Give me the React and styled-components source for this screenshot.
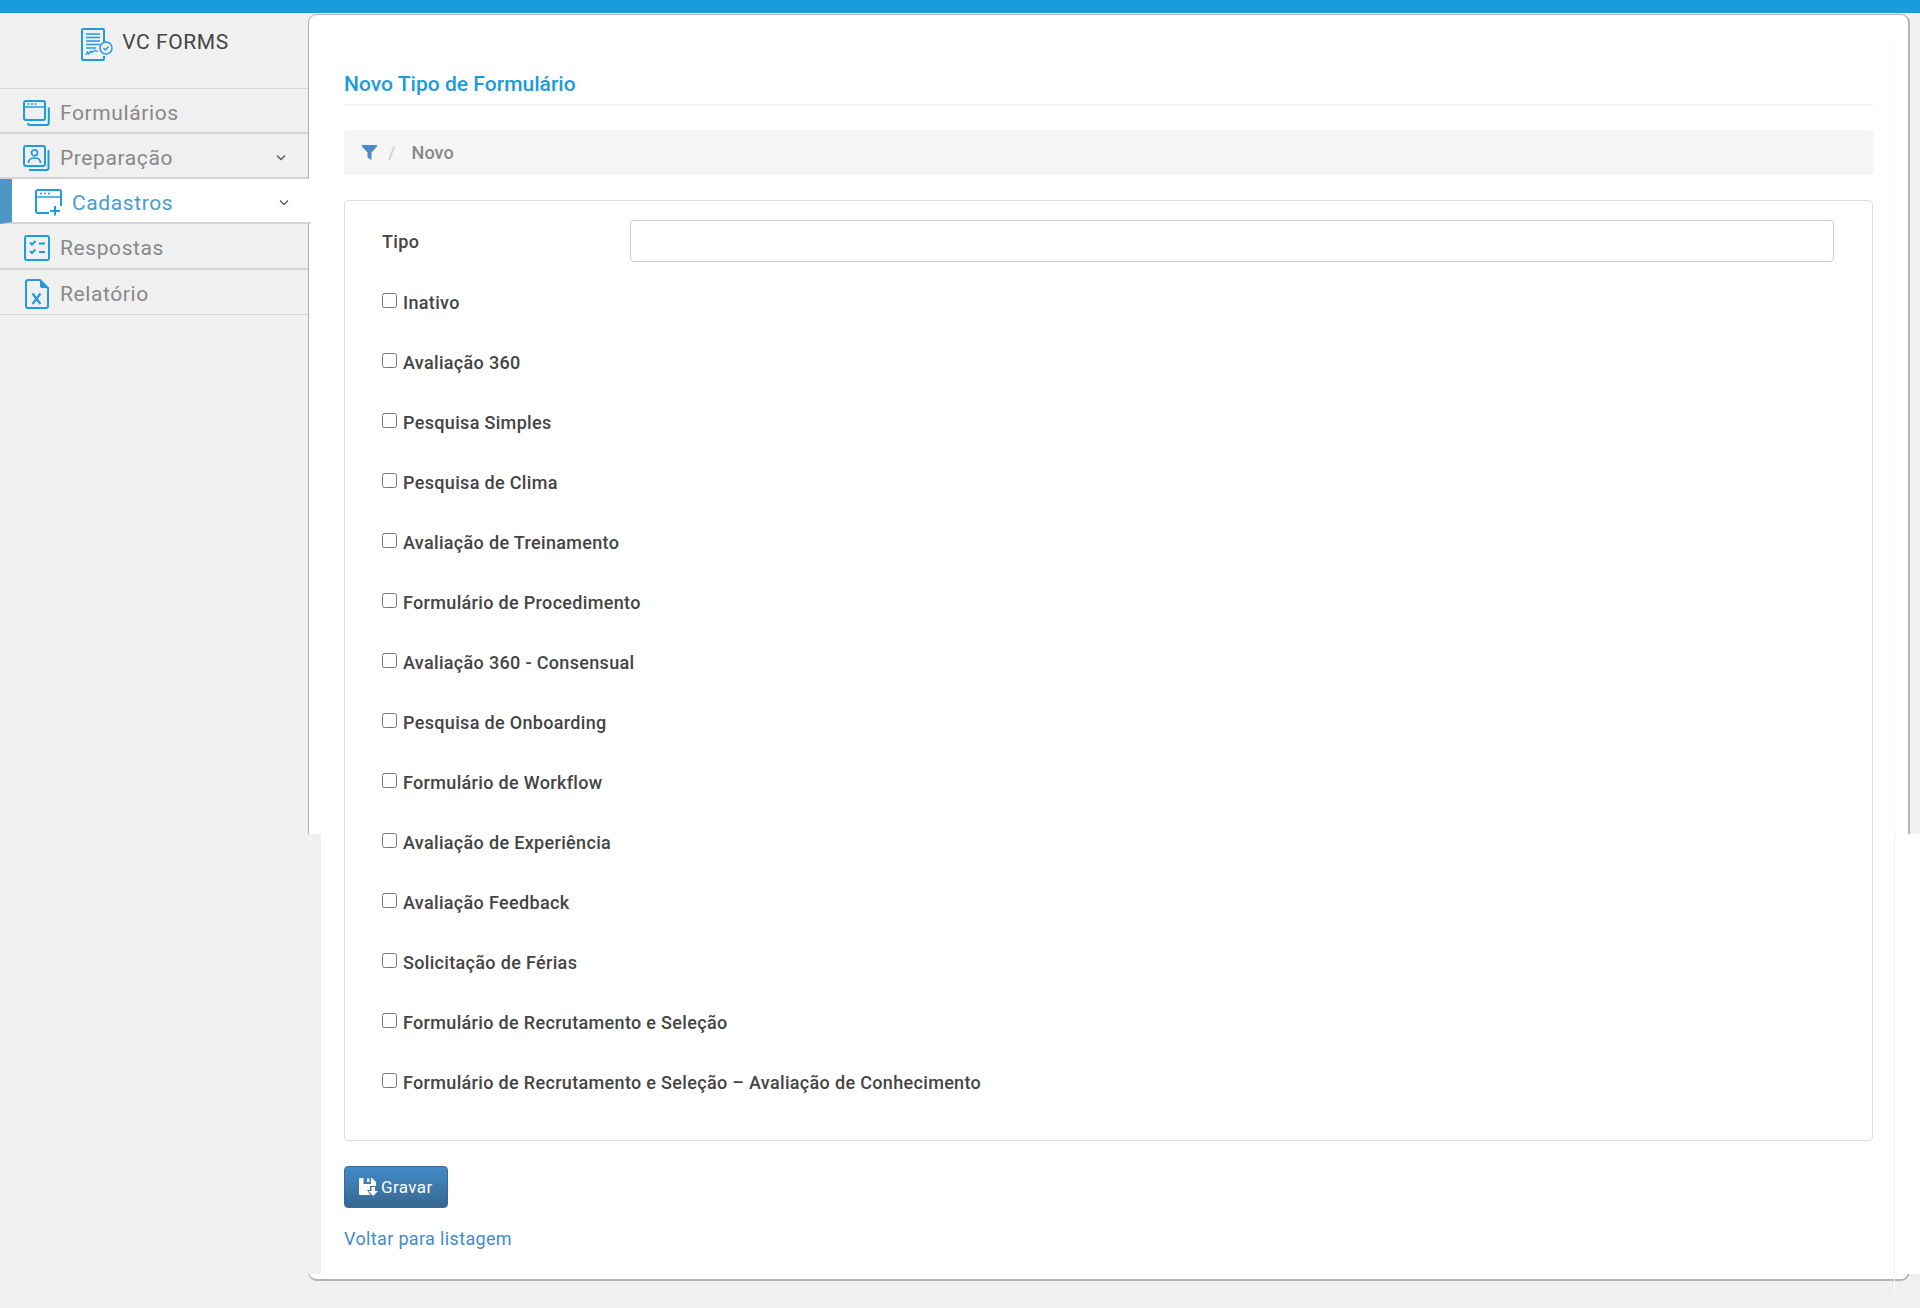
import React from 'react'
import styled, { createGlobalStyle } from 'styled-components'

const GlobalStyle = createGlobalStyle`
  html, body {
    margin: 0;
    padding: 0;
    background: #f0f0f0;
    font-family: Roboto, "Liberation Sans", sans-serif;
  }
  * { box-sizing: border-box; }
`

const Page = styled.div`
  width: 1920px;
  height: 1308px;
  overflow: hidden;
  background: #f0f0f0;
`

const TopBar = styled.div`
  height: 13px;
  background: #1a9bdc;
`

const Body = styled.div`
  display: flex;
  padding-top: 1px;
`

const Sidebar = styled.aside`
  width: 308px;
  flex: none;
`

const Brand = styled.div`
  height: 74px;
  display: flex;
  justify-content: center;
  align-items: flex-start;
  gap: 9px;
  padding: 14px 0 0 2px;
  font-size: 21px;
  line-height: 26px;
  color: #444;
`

const BrandText = styled.span`
  margin-top: 1px;
  letter-spacing: 0.6px;
`

const Menu = styled.nav`
  border-top: 1px solid #d6d6d6;
`

const Item = styled.a`
  position: relative;
  z-index: 2;
  height: ${p => (p.$tall ? '46px' : '45px')};
  display: flex;
  align-items: center;
  gap: 10px;
  padding: 4px 23px 0 23px;
  font-size: 21px;
  letter-spacing: 0.6px;
  color: ${p => (p.$active ? '#4a9bd0' : '#888')};
  background: ${p => (p.$active ? '#fff' : '#f0f0f0')};
  border-bottom: ${p => (p.$last ? '1px solid #d6d6d6' : '2px solid #d4d4d4')};
  border-left: ${p => (p.$active ? '12px solid #4b97c5' : 'none')};
  margin-right: ${p => (p.$active ? '-3px' : '0')};
`

const Label = styled.span`
  flex: 1;
`

const Chevron = styled.svg`
  width: 10px;
  height: 7px;
  fill: none;
  stroke: #555;
  stroke-width: 1.3;
  margin-right: -1px;
`

const IconSlot = styled.span`
  flex: none;
  width: 27px;
  display: flex;
  justify-content: center;
`

const IconBox = styled.svg`
  flex: none;
  width: ${p => p.$w}px;
  height: ${p => p.$h}px;
  fill: none;
  stroke: #1f9ce0;
  stroke-width: 2;
`

const Panel = styled.main`
  position: relative;
  flex: none;
  width: 1602px;
  height: 1267px;
  background: #fff;
  border: 1px solid #b4b4b4;
  border-right-width: 2px;
  border-bottom-width: 2px;
  border-radius: 9px;
`

const LeftSeam = styled.div`
  position: absolute;
  z-index: 1;
  left: -1px;
  top: 819px;
  width: 13px;
  height: 440px;
  background: #f0f0f0;
`

const RightSeam = styled.div`
  position: absolute;
  z-index: 1;
  left: 1585px;
  top: 819px;
  width: 30px;
  height: 440px;
  background: #fff;
  border-left: 1px solid #efefef;
`

const Content = styled.div`
  width: 1586px;
  height: 1259px;
  margin-top: 20px;
  padding: 0 21px 0 35px;
  border-right: 1px solid #fafafa;
`

const Title = styled.h1`
  margin: 0;
  height: 70px;
  padding-top: 37px;
  font-size: 21px;
  line-height: 24px;
  letter-spacing: 0.03px;
  font-weight: 500;
  color: #1a9bdc;
  border-bottom: 1px solid #eee;
`

const Breadcrumb = styled.div`
  height: 45px;
  margin-top: 25px;
  display: flex;
  align-items: center;
  padding-left: 18px;
  background: #f5f5f5;
  border-radius: 4px;
  font-size: 18px;
  letter-spacing: 0.1px;
  font-weight: 500;
  color: #888;
`

const Sep = styled.span`
  margin: 0 16px 0 11px;
  font-weight: 400;
  color: #ccc;
`

const Card = styled.section`
  height: 941px;
  margin-top: 25px;
  padding: 19px 38px 0 37px;
  border: 1px solid #ddd;
  border-radius: 4px;
`

const TipoRow = styled.div`
  display: flex;
  align-items: center;
  height: 42px;
  margin-bottom: 10px;
`

const TipoLabel = styled.label`
  width: 248px;
  font-size: 18px;
  letter-spacing: 0.33px;
  font-weight: 500;
  color: #444;
`

const TextInput = styled.input`
  flex: 1;
  height: 42px;
  border: 1px solid #ccc;
  border-radius: 4px;
  background: #fff;
`

const CheckRow = styled.label`
  display: flex;
  align-items: center;
  height: 60px;
  gap: 6px;
  padding-top: 1px;
  font-size: 18px;
  letter-spacing: 0.33px;
  font-weight: 500;
  color: #444;
`

const Check = styled.input`
  width: 15px;
  height: 15px;
  margin: 0 0 5px 0;
`

const SaveButton = styled.button`
  display: flex;
  align-items: center;
  gap: 3px;
  width: 104px;
  height: 42px;
  margin-top: 25px;
  padding: 0 0 0 14px;
  border: 1px solid #356a97;
  border-radius: 4px;
  background: linear-gradient(#428bca, #386790);
  color: #fff;
  font-family: inherit;
  font-size: 17px;
  letter-spacing: 0.4px;
`

const BackLink = styled.a`
  display: block;
  margin-top: 18px;
  font-size: 18px;
  line-height: 25px;
  letter-spacing: 0.35px;
  color: #428bca;
`

const options = [
  'Inativo',
  'Avaliação 360',
  'Pesquisa Simples',
  'Pesquisa de Clima',
  'Avaliação de Treinamento',
  'Formulário de Procedimento',
  'Avaliação 360 - Consensual',
  'Pesquisa de Onboarding',
  'Formulário de Workflow',
  'Avaliação de Experiência',
  'Avaliação Feedback',
  'Solicitação de Férias',
  'Formulário de Recrutamento e Seleção',
  'Formulário de Recrutamento e Seleção – Avaliação de Conhecimento',
]

const LogoIcon = () => (
  <IconBox $w={32} $h={33} viewBox="0 0 32 33">
    <path d="M23 19V2a1 1 0 0 0-1-1H2a1 1 0 0 0-1 1v29a1 1 0 0 0 1 1h20a1 1 0 0 0 1-1v-3" />
    <path d="M5 6h14M5 9.5h14M5 13h14M5 16.500h14M5 20h10" strokeWidth="1.300" />
    <path d="M5 27c1-3 2-4 2-2s1 1 2-1 1 2 2 0 1 1 2-1 1 1 4 0" strokeWidth="1.300" />
    <circle cx="25" cy="20" r="6" strokeWidth="1.500" fill="#f0f0f0" />
    <path d="M22.500 20l2 2 3-3.500" strokeWidth="1.500" />
  </IconBox>
)

const FormsIcon = () => (
  <IconBox $w={27} $h={26} viewBox="0 0 27 26">
    <rect x="1" y="1" width="21" height="19" rx="2" />
    <path d="M1 7h21" strokeWidth="1.500" />
    <path d="M4.500 4h2M8 4h2M11.500 4h2" strokeWidth="1.300" />
    <path d="M25.800 7.500V23a2 2 0 0 1-2 2H7a2 2 0 0 1-2-2" />
  </IconBox>
)

const PrepIcon = () => (
  <IconBox $w={27} $h={26} viewBox="0 0 27 26">
    <rect x="1" y="1" width="21" height="20" rx="2" />
    <circle cx="11.500" cy="7.800" r="3" strokeWidth="1.700" />
    <path d="M5.500 18c0-3.500 2-5 6-5s6 1.500 6 5" strokeWidth="1.700" />
    <path d="M25.500 5v18a2 2 0 0 1-2 2H6" />
  </IconBox>
)

const RegisterIcon = () => (
  <IconBox $w={27} $h={27} viewBox="0 0 27 27">
    <path d="M14 24H3a2 2 0 0 1-2-2V3a2 2 0 0 1 2-2h21a2 2 0 0 1 2 2v14" />
    <path d="M1 8h25" strokeWidth="1.500" />
    <path d="M5 4.500h2M9 4.500h2M13 4.500h2" strokeWidth="1.300" />
    <path d="M20 17v9.500M15 22h10" />
  </IconBox>
)

const AnswersIcon = () => (
  <IconBox $w={26} $h={26} viewBox="0 0 26 26">
    <rect x="1" y="1" width="24" height="24" rx="2" />
    <path d="M6 7.500l2 2 3.500-3.500M6 16l2 2 3.500-3.500" />
    <path d="M15 8.500h6M15 17h6" />
  </IconBox>
)

const ReportIcon = () => (
  <IconBox $w={24} $h={30} viewBox="0 0 24 30">
    <path d="M15 1H3a2 2 0 0 0-2 2v24a2 2 0 0 0 2 2h18a2 2 0 0 0 2-2V9z" />
    <path d="M15 1v6a2 2 0 0 0 2 2h6z" fill="#1f9ce0" stroke="none" />
    <path d="M7.500 14.500l8 10.500M15.500 14.500l-8 10.500" strokeWidth="2.200" />
  </IconBox>
)

const ChevronIcon = () => (
  <Chevron viewBox="0 0 10 7">
    <path d="M1 1.500l4 4 4-4" />
  </Chevron>
)

const FunnelIcon = () => (
  <svg width="15" height="15" viewBox="0 0 15 15">
    <path d="M0 0h15v1.500L9.500 7.500V15L5.500 12.500v-5L0 1.500z" fill="#4a8bc5" />
  </svg>
)

const SaveIcon = () => (
  <svg width="19" height="18" viewBox="0 0 19 18">
    <path
      d="M1 0h3.500v6H12V0h1l4 4v4h-6v4H8l3.500 5H1a1 1 0 0 1-1-1V1a1 1 0 0 1 1-1zM8 0.500h2.500V4H8z"
      fill="#fff"
    />
    <path d="M12.500 9h3.500v4h3l-4.800 5-4.700-5h3z" fill="#fff" />
  </svg>
)

const App = () => {
  return (
    <Page>
      <GlobalStyle />
      <TopBar />
      <Body>
        <Sidebar>
          <Brand>
            <LogoIcon />
            <BrandText>VC FORMS</BrandText>
          </Brand>
          <Menu>
            <Item><IconSlot><FormsIcon /></IconSlot><Label>Formulários</Label></Item>
            <Item><IconSlot><PrepIcon /></IconSlot><Label>Preparação</Label><ChevronIcon /></Item>
            <Item $active><IconSlot><RegisterIcon /></IconSlot><Label>Cadastros</Label><ChevronIcon /></Item>
            <Item $tall><IconSlot><AnswersIcon /></IconSlot><Label>Respostas</Label></Item>
            <Item $last><IconSlot><ReportIcon /></IconSlot><Label>Relatório</Label></Item>
          </Menu>
        </Sidebar>
        <Panel>
          <LeftSeam />
          <RightSeam />
          <Content>
            <Title>Novo Tipo de Formulário</Title>
            <Breadcrumb>
              <FunnelIcon />
              <Sep>/</Sep>
              Novo
            </Breadcrumb>
            <Card>
              <TipoRow>
                <TipoLabel>Tipo</TipoLabel>
                <TextInput type="text" />
              </TipoRow>
              {options.map(name => (
                <CheckRow key={name}>
                  <Check type="checkbox" />
                  {name}
                </CheckRow>
              ))}
            </Card>
            <SaveButton><SaveIcon /> Gravar</SaveButton>
            <BackLink>Voltar para listagem</BackLink>
          </Content>
        </Panel>
      </Body>
    </Page>
  )
}

export default App
